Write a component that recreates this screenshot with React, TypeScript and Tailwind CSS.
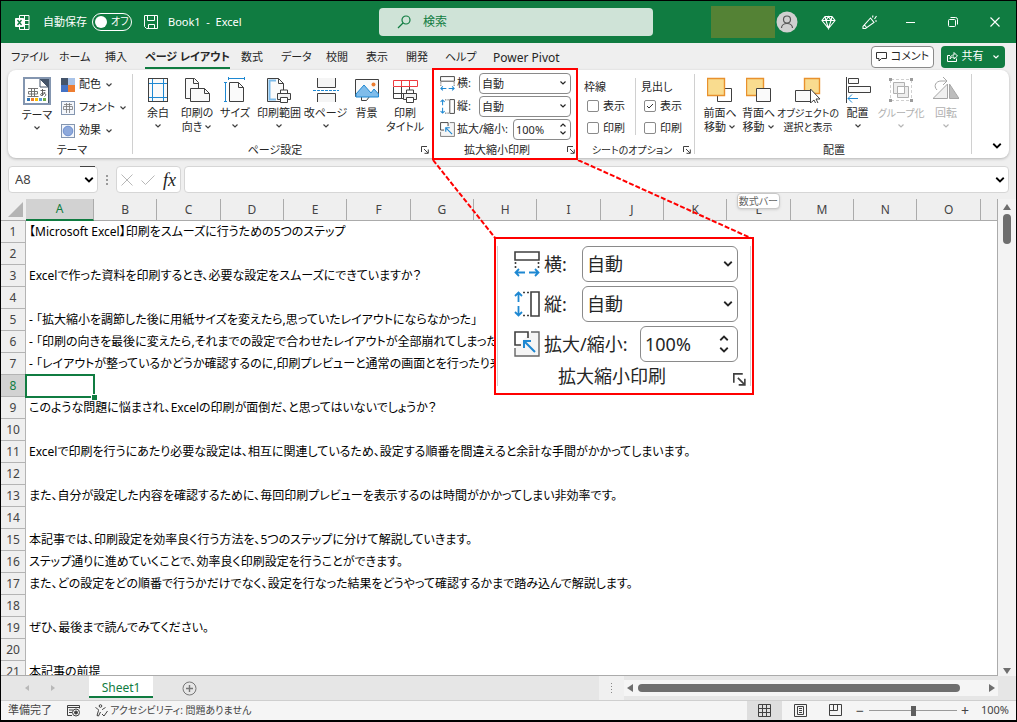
import { ReactNode } from 'react';
import clsx from 'clsx';

const BLUE = '#1e88d2';
const DARK = '#404040';
const ORANGE = '#e8912d';

/* ---------- icons ---------- */

interface IconProps {
  children?: ReactNode;
  className?: string;
  box?: string;
}

function Icon({ children, className = 'size-[26px]', box = '0 0 26 26' }: IconProps) {
  return (
    <svg viewBox={box} className={clsx('shrink-0', className)} fill="none" stroke={DARK} aria-hidden="true">
      {children}
    </svg>
  );
}

function Chevron({ className = 'size-2 text-[#404040]', up = false }: { className?: string; up?: boolean }) {
  return (
    <svg viewBox="0 0 8 8" className={clsx('shrink-0', className)} fill="none" stroke="currentColor" strokeWidth="1.2" aria-hidden="true">
      <path d={up ? 'M1.5 5.5 4 3l2.5 2.5' : 'M1.5 2.5 4 5l2.5-2.5'} />
    </svg>
  );
}

const ThemeIcon = () => (
  <Icon className="size-7" box="0 0 28 28">
    <rect x="1" y="1" width="26" height="26" fill="#fff" stroke="#8496b0" strokeWidth="2" />
    <path d="M17 2h9v24h-1V10z" fill="#44546a" stroke="none" />
    <path d="M17 2v8h8z" fill="#fff" stroke="#44546a" />
    <path d="M5 11.500h10M8.500 11.500v8M11.500 11.500v8M4.500 19.500h11M5.500 14.500h9v2.500h-9z" stroke="#666" strokeWidth=".9" />
    <path d="M17.500 13.500h5M19.500 12v6.500M22 15c-1 2.500-3 4-4 3.500s0-2.500 2.500-2.500 3 2.500 1 3.500" stroke="#555" strokeWidth=".9" />
    <path d="M4 22.500h3" stroke="#2e75b6" strokeWidth="3" />
    <path d="M8 22.500h3" stroke="#ed7d31" strokeWidth="3" />
    <path d="M12 22.500h3" stroke="#ffc000" strokeWidth="3" />
    <path d="M16 22.500h3" stroke="#5b9bd5" strokeWidth="3" />
    <path d="M20 22.500h3" stroke="#70ad47" strokeWidth="3" />
  </Icon>
);

const ColorsIcon = () => (
  <Icon className="size-[14px]" box="0 0 14 14">
    <g stroke="none">
      <path d="M0 0h7v7H0z" fill="#44546a" />
      <path d="M7 0h7v7H7z" fill="#a9c3e8" />
      <path d="M0 7h7v7H0z" fill="#4472c4" />
      <path d="M7 7h7v7H7z" fill="#ed7d31" />
    </g>
  </Icon>
);

const FontsIcon = () => (
  <Icon className="size-[14px]" box="0 0 14 14">
    <rect x=".5" y=".5" width="13" height="13" fill="#f3f6fb" stroke="#8496b0" />
    <path d="M3 3.500h8M5.500 2v10M8.500 2v10M2.500 5.500h9v3h-9z" stroke="#777" strokeWidth=".8" />
  </Icon>
);

const EffectsIcon = () => (
  <Icon className="size-[14px]" box="0 0 14 14">
    <rect x=".5" y=".5" width="13" height="13" fill="#f3f6fb" stroke="#8496b0" />
    <circle cx="7" cy="7" r="4.800" fill="#8ea9db" stroke="#6d8fd0" />
  </Icon>
);

const MarginsIcon = () => (
  <Icon>
    <rect x="3.500" y="1.500" width="19" height="23" fill="#fafafa" />
    <path d="M7.500 2v22M18.500 2v22M4 6.500h18M4 20.500h18" stroke={BLUE} />
  </Icon>
);

const OrientationIcon = () => (
  <Icon>
    <path d="M6 21.500H1.500v-20h9l4 4V11" fill="#fafafa" />
    <path d="M9.500 1.500v5h5" />
    <path d="M6.500 11.500h14l5 5v8h-19z" fill="#fafafa" />
    <path d="M20.500 11.500v5h5" />
  </Icon>
);

const SizeIcon = () => (
  <Icon>
    <path d="M7.500 5.500h9l5 5v14h-14z" fill="#fafafa" />
    <path d="M16.500 5.500v5h5" />
    <path d="M7 1.500h15M6.500 0v3M22.500 0v3M3.500 5v20M2 5.500h3M2 24.500h3" stroke={BLUE} />
  </Icon>
);

const Printer = () => (
  <g>
    <path d="M14.500 17v-4h7v4" fill="#fff" />
    <path d="M11.500 16.500h13v6h-13z" fill="#f2f2f2" />
    <path d="M14.500 20.500h7v5h-7z" fill="#fff" />
  </g>
);

const PrintAreaIcon = () => (
  <Icon>
    <path d="M1.500 1.500h11l5 5v18h-16z" fill="#fafafa" />
    <path d="M12.500 1.500v5h5" />
    <path d="M10 3.500H3.500v19H10" stroke="#7fbcea" strokeWidth="2" />
    <Printer />
  </Icon>
);

const BreaksIcon = () => (
  <Icon>
    <path d="M4.500 1v9.500h18V1M4.500 25v-8.500h18V25" fill="#f5f5f5" />
    <path d="M0 13.500h26" stroke={BLUE} strokeDasharray="3 1" />
  </Icon>
);

const BackgroundIcon = () => (
  <Icon>
    <path d="M1.500 2.500h23v17h-9l-3 4h-5v-4h-6z" fill="#fafafa" />
    <circle cx="19.500" cy="7.500" r="2" fill="#ed7d31" stroke="none" />
    <path d="m2 17 8-9 7 8 3-4 4.500 5v3H2z" fill="#7fbcea" stroke={BLUE} />
  </Icon>
);

const PrintTitlesIcon = () => (
  <Icon>
    <path d="M1.500 10v11.500H12M1.500 16.500H14M9.500 10v11M17.500 10v4" />
    <path d="M1.500 3.500h24v6h-24zM9.500 3.500v6M17.500 3.500v6" fill="#fff" stroke="#ee3b40" />
    <Printer />
  </Icon>
);

const BringForwardIcon = () => (
  <Icon>
    <path d="M10.500 11.500h14v13h-14z" />
    <path d="M.5 1.500h17v17H.5z" fill="#f9dc8f" stroke={ORANGE} strokeWidth="1.400" />
  </Icon>
);

const SendBackwardIcon = () => (
  <Icon>
    <path d="M.5 1.500h17v17H.5z" fill="#f9dc8f" stroke={ORANGE} strokeWidth="1.400" />
    <path d="M10.500 11.500h14v13h-14z" fill="#fafafa" />
  </Icon>
);

const SelectionIcon = () => (
  <Icon>
    <path d="M9.500 1.500h15v15h-15z" fill="#f9dc8f" stroke={ORANGE} strokeWidth="1.400" />
    <path d="M.5 13.500h15v11H.5z" fill="#fafafa" />
    <path d="M15.500 12v14l3.500-3 2 4 2-1-2-4h4z" fill="#fff" />
  </Icon>
);

const AlignIcon = () => (
  <Icon>
    <path d="M1.500 0v26" />
    <path d="M3.500 1.500h10v5h-10zM3.500 9.500h22v6h-22z" fill="#fafafa" />
    <path d="M3 21.500h10M7 17.500l-4 4 4 4" stroke={BLUE} />
  </Icon>
);

const GroupIcon = () => (
  <Icon>
    <g stroke="#b0b0b0">
      <path d="M2.500 3v20M23.500 3v20M3 2.500h20M3 23.500h20" strokeDasharray="3 2" stroke="#d0d0d0" />
      <path d="M5.500 5.500h11v11h-11zM9.500 9.500h11v11h-11z" fill="#eee" />
      <path d="M9.500 9.500h7v7h-7z" fill="#fff" />
    </g>
    <path d="M1 1h3v3H1zM22 1h3v3h-3zM1 22h3v3H1zM22 22h3v3h-3z" fill="#9c9c9c" stroke="none" />
  </Icon>
);

const RotateIcon = () => (
  <Icon>
    <g stroke="#a6a6a6">
      <path d="M14.500 7v14.500H0z" fill="#f0f0f0" />
      <path d="M16.500 7v14.500H26z" fill="#bdbdbd" />
      <path d="M4 13c-4-4-1-9 4-9h5M10 0l4 4-4 4" />
    </g>
  </Icon>
);

const WidthIcon = ({ className }: IconProps) => (
  <Icon className={className}>
    <path d="M1 1h24v8H1z" strokeWidth="1.600" />
    <path d="M1.500 11v2m0 2v2M24.500 11v2m0 2v2" strokeWidth="1.600" />
    <path d="M11 21.500H1.500M5 18l-3.500 3.500L5 25M15 21.500h9.500M21 18l3.500 3.500L21 25" stroke={BLUE} strokeWidth="1.800" />
  </Icon>
);

const HeightIcon = ({ className }: IconProps) => (
  <Icon className={className}>
    <path d="M17 1h8v24h-8z" strokeWidth="1.600" />
    <path d="M9 1.500h2m2 0h2M9 24.500h2m2 0h2" strokeWidth="1.600" />
    <path d="M4.500 11V1.500M1 5l3.500-3.500L8 5M4.500 15v9.500M1 21l3.500 3.500L8 21" stroke={BLUE} strokeWidth="1.800" />
  </Icon>
);

const ScaleIcon = ({ className }: IconProps) => (
  <Icon className={className}>
    <path d="M17 1h8v24H1v-8" fill="#f5f5f5" strokeWidth="1.400" stroke="#666" />
    <path d="M14 7V1H1v13h6" strokeWidth="1.600" />
    <path d="M21 21 10.500 10.500M10 17v-7h7" stroke={BLUE} strokeWidth="2" />
  </Icon>
);

const LauncherIcon = ({ className = 'size-2' }: IconProps) => (
  <Icon className={className} box="0 0 8 8">
    <path d="M.5 6V.5H6M3 3l4 4M7.300 3.500v3.800H3.500" />
  </Icon>
);

/* ---------- title bar ---------- */

function TitleBar() {
  return (
    <header className="grid h-[42px] shrink-0 grid-cols-[378fr_274fr_363fr] items-center bg-[#107c41] text-xs text-white">
      <div className="flex items-center pl-[14px]">
        <svg viewBox="0 0 15 15" className="size-[15px]" fill="none" stroke="#fff" aria-hidden="true">
          <path d="M4.500 3V.500h9.500v14H4.500V12M9.500.5v14M9 5.500h5M9 9.500h5" />
          <path d="M.5 3.500h8v8h-8z" fill="#fff" />
          <path d="m2.500 5 4 5M6.500 5l-4 5" stroke="#107c41" strokeWidth="1.300" />
        </svg>
        <span className="ml-[13px] w-[49px] text-[11px]">自動保存</span>
        <button className="flex h-[18px] w-10 items-center gap-1 rounded-full border border-white pl-0.5 text-[10px]" aria-label="自動保存 オフ">
          <span className="size-3 rounded-full bg-white" />
          オフ
        </button>
        <button className="ml-3" aria-label="上書き保存">
          <svg viewBox="0 0 14 14" className="size-[14px]" fill="none" stroke="#fff" aria-hidden="true">
            <path d="M.5.5h13v13h-11l-2-2zM3.500.5v5h7v-5M4.500 13.500v-4h6v4" />
          </svg>
        </button>
        <span className="ml-[10px] text-[11px] whitespace-pre">Book1  -  Excel</span>
      </div>
      <label className="flex h-7 items-center gap-3 rounded bg-[#cfe3d7] pl-[18px]">
        <svg viewBox="0 0 14 14" className="size-[14px]" fill="none" stroke="#107c41" strokeWidth="1.200" aria-hidden="true">
          <circle cx="9" cy="5" r="4" />
          <path d="m6 8-5 5" />
        </svg>
        <input className="w-40 bg-transparent outline-none placeholder:text-[#107c41]" placeholder="検索" aria-label="検索" />
      </label>
      <div className="flex items-center justify-end pr-4">
        <span className="h-8 w-16 bg-[#548235]" />
        <button aria-label="アカウント" className="ml-px">
          <svg viewBox="0 0 22 22" className="size-[22px]" fill="none" stroke="#555" strokeWidth="1.200" aria-hidden="true">
            <circle cx="11" cy="11" r="10.500" fill="#d0d0d0" stroke="none" />
            <circle cx="11" cy="8.500" r="3.500" />
            <path d="M5.500 17c0-6 11-6 11 0" />
          </svg>
        </button>
        <button aria-label="プレミアム" className="ml-[23px]">
          <svg viewBox="0 0 15 15" className="size-[15px]" fill="none" stroke="#fff" strokeWidth="1.100" aria-hidden="true">
            <path d="M4 1.500h7l3 4-6.500 8L1 5.500zM1 5.500h13M4 1.500l1 4 2.500 8 2.500-8 1-4M5 5.500l2.500-4 2.500 4" />
          </svg>
        </button>
        <button aria-label="新機能" className="ml-[26px]">
          <svg viewBox="0 0 15 15" className="size-[15px]" fill="none" stroke="#fff" strokeWidth="1.100" aria-hidden="true">
            <path d="M8.500 3 1 11.500v2h2.500L12 7.500zM2.500 10l2.500 3M10.500 2.500l.5-2M12.500 4l2-3M13 6h2" />
          </svg>
        </button>
        <button aria-label="最小化" className="ml-[29px]">
          <svg viewBox="0 0 10 10" className="size-[10px]" stroke="#fff" aria-hidden="true">
            <path d="M0 5.500h9" />
          </svg>
        </button>
        <button aria-label="元に戻す" className="ml-8">
          <svg viewBox="0 0 10 10" className="size-[10px]" fill="none" stroke="#fff" aria-hidden="true">
            <rect x=".5" y="2.500" width="7" height="7" rx="1" />
            <path d="M2.500.5h5a2 2 0 0 1 2 2v5" />
          </svg>
        </button>
        <button aria-label="閉じる" className="ml-8">
          <svg viewBox="0 0 10 10" className="size-[10px]" stroke="#fff" strokeWidth="1.100" aria-hidden="true">
            <path d="m.5.5 9 9M9.500.5l-9 9" />
          </svg>
        </button>
      </div>
    </header>
  );
}

/* ---------- ribbon tabs ---------- */

const TABS = [
  { name: 'ファイル', width: 'w-12' },
  { name: 'ホーム', width: 'w-[46px]' },
  { name: '挿入', width: 'w-10' },
  { name: 'ページ レイアウト', width: 'w-24' },
  { name: '数式', width: 'w-10' },
  { name: 'データ', width: 'w-[45px]' },
  { name: '校閲', width: 'w-10' },
  { name: '表示', width: 'w-10' },
  { name: '開発', width: 'w-[39px]' },
  { name: 'ヘルプ', width: 'w-12' },
  { name: 'Power Pivot', width: 'w-20 text-xs' },
];

function RibbonTabs() {
  return (
    <nav className="flex h-[27px] items-center pr-[11px] pl-[10px] text-[11px]">
      {TABS.map((tab) => (
        <div key={tab.name} className={tab.width}>
          <button
            className={clsx(
              'mt-1 h-5 border-b-2 whitespace-nowrap',
              tab.name === 'ページ レイアウト' ? 'border-[#107c41] font-bold' : 'border-transparent',
            )}
          >
            {tab.name}
          </button>
        </div>
      ))}
      <button className="ml-auto flex h-[22px] w-[63px] items-center justify-center gap-1 rounded border border-[#8a8a8a] bg-white whitespace-nowrap">
        <svg viewBox="0 0 11 11" className="size-[11px]" fill="none" stroke="#333" aria-hidden="true">
          <path d="M.5 1.500h10v6h-5l-2.500 2.500v-2.500H.5z" />
        </svg>
        コメント
      </button>
      <button className="ml-[7px] flex h-[22px] w-16 items-center justify-center gap-1 rounded bg-[#107c41] text-white">
        <svg viewBox="0 0 11 11" className="size-[11px]" fill="none" stroke="#fff" aria-hidden="true">
          <path d="M3 4.500H.5v6h9v-3M3 8c0-3 2-4 4-4V1.500L10.500 5 7 8V6C5 6 4 6.500 3 8z" />
        </svg>
        共有
        <Chevron className="ml-1 size-2" />
      </button>
    </nav>
  );
}

/* ---------- ribbon ---------- */

interface GroupProps {
  title: string;
  className: string;
  titleClass?: string;
  launcher?: boolean;
  children: ReactNode;
}

function Group({ title, className, titleClass, launcher, children }: GroupProps) {
  return (
    <section className={clsx('relative flex shrink-0 flex-col', className)}>
      <div className="flex h-[73px]">{children}</div>
      <div className="flex h-[14px] items-center">
        <h2 className={clsx('flex-1 text-center leading-[14px]', titleClass)}>{title}</h2>
        {launcher && (
          <button aria-label={`${title}の詳細`} className="absolute right-[3px]">
            <LauncherIcon />
          </button>
        )}
      </div>
    </section>
  );
}

const Divider = ({ className = 'my-1 bg-[#d0d0d0]' }: { className?: string }) => (
  <div className={clsx('w-px shrink-0', className)} />
);

interface BigButtonProps {
  icon: ReactNode;
  lines: string[];
  width: string;
  menu?: 'inline' | 'below';
  disabled?: boolean;
}

function BigButton({ icon, lines, width, menu, disabled }: BigButtonProps) {
  const chevron = disabled ? 'size-2 text-[#b5b5b5]' : 'size-2 text-[#404040]';
  return (
    <button
      disabled={disabled}
      className={clsx('flex shrink-0 flex-col items-center pt-[7px] leading-[14px] whitespace-nowrap', width, disabled && 'text-[#b0b0b0]')}
    >
      {icon}
      <span className="mt-[3px]">{lines[0]}</span>
      {lines[1] && (
        <span className="flex items-center gap-0.5">
          {lines[1]}
          {menu === 'inline' && <Chevron className={chevron} />}
        </span>
      )}
      {menu === 'below' && <Chevron className={clsx('mt-0.5', chevron)} />}
    </button>
  );
}

const THEME_ITEMS = [
  { name: '配色', icon: <ColorsIcon /> },
  { name: 'フォント', icon: <FontsIcon /> },
  { name: '効果', icon: <EffectsIcon /> },
];

const SCALE_ROWS = [
  { id: 'width', label: '横:', Glyph: WidthIcon },
  { id: 'height', label: '縦:', Glyph: HeightIcon },
];

function ScaleFields() {
  return (
    <div className="flex flex-1 flex-col gap-0.5 pt-[3px] pr-[7px] pl-2">
      {SCALE_ROWS.map(({ id, label, Glyph }) => (
        <div key={id} className="flex h-[21px] items-center">
          <Glyph className="size-[15px]" />
          <label htmlFor={id} className="ml-0.5 flex-1 whitespace-nowrap">{label}</label>
          <div className="relative">
            <select id={id} className="block h-[21px] w-[92px] appearance-none rounded border border-[#8a8a8a] bg-white pl-0.5 leading-[14px]">
              <option>自動</option>
            </select>
            <Chevron className="pointer-events-none absolute top-1.5 right-1 size-2" />
          </div>
        </div>
      ))}
      <div className="flex h-[21px] items-center">
        <ScaleIcon className="size-[15px]" />
        <label htmlFor="scale" className="ml-0.5 flex-1 whitespace-nowrap">拡大/縮小:</label>
        <div className="relative">
          <input id="scale" defaultValue="100%" className="block h-[21px] w-[58px] rounded border border-[#8a8a8a] bg-white pl-0.5" />
          <span className="pointer-events-none absolute top-0.5 right-1">
            <Chevron up className="size-2" />
            <Chevron className="size-2" />
          </span>
        </div>
      </div>
    </div>
  );
}

/* Enlarged copy of the scaling group, joined to it by two dashed leader lines */
function Callout() {
  return (
    <>
      <div className="pointer-events-none absolute inset-x-0 -top-0.5 -bottom-0.5 z-20 border-2 border-[#ff0000]" />
      <svg viewBox="0 0 322 80" className="pointer-events-none absolute top-[90px] left-0 z-20 h-20 w-[322px]" stroke="#ff0000" strokeWidth="2" strokeDasharray="5 2" aria-hidden="true">
        <path d="M1 0 64 79M146 0 321 79" />
      </svg>
      <div className="absolute top-[167px] left-[62px] z-20 flex w-[260px] border-2 border-[#ff0000] bg-white px-px py-[7px] text-lg">
        <Divider className="bg-[#d0d0d0]" />
        <div className="flex flex-1 flex-col gap-1 pr-3 pl-4">
          {SCALE_ROWS.map(({ id, label, Glyph }) => (
            <div key={id} className="flex h-9 items-center">
              <Glyph className="size-[26px]" />
              <label htmlFor={`${id}-large`} className="ml-1 flex-1 whitespace-nowrap">{label}</label>
              <div className="relative">
                <select id={`${id}-large`} className="block h-9 w-[156px] appearance-none rounded-md border border-[#8a8a8a] bg-white pl-1 leading-6">
                  <option>自動</option>
                </select>
                <Chevron className="pointer-events-none absolute top-3 right-1 size-3" />
              </div>
            </div>
          ))}
          <div className="flex h-9 items-center">
            <ScaleIcon className="size-[26px]" />
            <label htmlFor="scale-large" className="ml-1 flex-1 whitespace-nowrap">拡大/縮小:</label>
            <div className="relative">
              <input id="scale-large" defaultValue="100%" className="block h-9 w-[98px] rounded-md border border-[#8a8a8a] bg-white pl-1" />
              <span className="pointer-events-none absolute top-1.5 right-2 flex flex-col">
                <Chevron up className="size-3" />
                <Chevron className="size-3" />
              </span>
            </div>
          </div>
          <div className="relative h-5 pr-7 text-center leading-5">
            拡大縮小印刷
            <LauncherIcon className="absolute -right-2 bottom-0 size-[13px]" />
          </div>
        </div>
        <Divider className="bg-[#d0d0d0]" />
      </div>
    </>
  );
}

const SHEET_OPTIONS = [
  { title: '枠線', checks: [false, false], pad: 'w-[57px] pl-1.5' },
  { title: '見出し', checks: [true, false], pad: 'pl-[5px]' },
];

function CheckBox({ label, name, checked }: { label: string; name: string; checked: boolean }) {
  return (
    <label className="relative flex h-[22px] items-center gap-1 pl-[3px]">
      <input
        type="checkbox"
        aria-label={name}
        defaultChecked={checked}
        className="peer size-3 appearance-none rounded-[2px] border border-[#8a8a8a] bg-white"
      />
      <svg viewBox="0 0 12 12" className="pointer-events-none absolute left-[3px] hidden size-3 peer-checked:block" fill="none" stroke="#333" aria-hidden="true">
        <path d="m3 6 2 2 4-4" />
      </svg>
      {label}
    </label>
  );
}

function Ribbon() {
  return (
    <div className="mx-[7px] flex h-[88px] shrink-0 rounded-lg bg-white text-[11px] shadow-[0_1px_3px_rgba(0,0,0,0.25)]">
      <Group title="テーマ" className="w-[124px]" titleClass="pl-1">
        <BigButton icon={<ThemeIcon />} lines={['テーマ']} width="w-11 ml-[7px]" menu="below" />
        <div className="flex flex-col pt-[3px] pl-0.5">
          {THEME_ITEMS.map((item) => (
            <button key={item.name} className="flex h-[23px] items-center gap-1 whitespace-nowrap">
              {item.icon}
              {item.name}
              <Chevron />
            </button>
          ))}
        </div>
      </Group>
      <Divider />
      <Group title="ページ設定" className="w-[299px] pl-[5px]" titleClass="pr-5" launcher>
        <BigButton icon={<MarginsIcon />} lines={['余白']} width="w-10" menu="below" />
        <BigButton icon={<OrientationIcon />} lines={['印刷の', '向き']} width="w-[38px]" menu="inline" />
        <BigButton icon={<SizeIcon />} lines={['サイズ']} width="w-[38px]" menu="below" />
        <BigButton icon={<PrintAreaIcon />} lines={['印刷範囲']} width="w-[50px]" menu="below" />
        <BigButton icon={<BreaksIcon />} lines={['改ページ']} width="w-[43px]" menu="below" />
        <BigButton icon={<BackgroundIcon />} lines={['背景']} width="w-[39px]" />
        <BigButton icon={<PrintTitlesIcon />} lines={['印刷', 'タイトル']} width="w-[38px]" />
      </Group>
      <div className="relative">
        <Group title="拡大縮小印刷" className="w-[146px]" titleClass="pr-4" launcher>
          <ScaleFields />
        </Group>
        <Callout />
      </div>
      <Group title="シートのオプション" className="w-[116px]" titleClass="pr-2 text-[10px]" launcher>
        {SHEET_OPTIONS.map((col, i) => (
          <div key={col.title} className="flex">
            {i > 0 && <Divider className="my-2 bg-[#d0d0d0]" />}
            <div className={clsx('pt-2 whitespace-nowrap', col.pad)}>
              <div className="h-[17px] leading-[17px]">{col.title}</div>
              <CheckBox label="表示" name={`${col.title} 表示`} checked={col.checks[0]} />
              <CheckBox label="印刷" name={`${col.title} 印刷`} checked={col.checks[1]} />
            </div>
          </div>
        ))}
      </Group>
      <Divider />
      <Group title="配置" className="w-[276px] pl-1.5" titleClass="pr-1">
        <BigButton icon={<BringForwardIcon />} lines={['前面へ', '移動']} width="w-[38px]" menu="inline" />
        <BigButton icon={<SendBackwardIcon />} lines={['背面へ', '移動']} width="w-[39px]" menu="inline" />
        <BigButton icon={<SelectionIcon />} lines={['オブジェクトの', '選択と表示']} width="w-[60px] text-[10px]" />
        <BigButton icon={<AlignIcon />} lines={['配置']} width="w-[39px]" menu="below" />
        <BigButton icon={<GroupIcon />} lines={['グループ化']} width="w-12 text-[10px]" menu="below" disabled />
        <BigButton icon={<RotateIcon />} lines={['回転']} width="w-[42px]" menu="below" disabled />
      </Group>
      <Divider />
      <button aria-label="リボンを折りたたむ" className="mr-1.5 mb-1.5 ml-auto self-end">
        <Chevron className="size-3 text-black" />
      </button>
    </div>
  );
}

/* ---------- formula bar ---------- */

function FormulaBar() {
  return (
    <div className="mx-[7px] mt-2 flex h-[27px] shrink-0 text-[13px]">
      <div className="relative flex w-[90px] items-center rounded border border-[#d6d6d6] bg-white">
        <input defaultValue="A8" aria-label="名前ボックス" className="w-16 bg-transparent pl-1.5 text-[#444] outline-none" />
        <button aria-label="名前の一覧" className="mr-0.5 ml-auto">
          <Chevron className="size-3 text-black" />
        </button>
        <span className="absolute -top-px right-0.5 h-px w-[15px] bg-[#444]" />
      </div>
      <div className="flex w-[18px] flex-col items-center justify-center gap-0.5">
        <span className="size-0.5 bg-[#9a9a9a]" />
        <span className="size-0.5 bg-[#9a9a9a]" />
        <span className="size-0.5 bg-[#9a9a9a]" />
      </div>
      <div className="flex w-[65px] items-center gap-2 rounded border border-[#d6d6d6] bg-white pl-1">
        <button aria-label="キャンセル">
          <svg viewBox="0 0 12 12" className="size-3" stroke="#b8b8b8" aria-hidden="true">
            <path d="m.5.5 11 11M11.500.5l-11 11" />
          </svg>
        </button>
        <button aria-label="入力">
          <svg viewBox="0 0 14 12" className="h-3 w-[14px]" fill="none" stroke="#b8b8b8" aria-hidden="true">
            <path d="m.5 6.500 4 4 9-9" />
          </svg>
        </button>
        <button className="font-['Liberation_Serif',serif] text-lg leading-none text-[#222] italic">fx</button>
      </div>
      <div className="relative ml-[3px] flex flex-1 items-center rounded border border-[#d6d6d6] bg-white">
        <input aria-label="数式バー" className="w-full bg-transparent px-2 outline-none" />
        <button aria-label="数式バーの展開" className="mr-0.5">
          <Chevron className="size-3 text-black" />
        </button>
        <span role="tooltip" className="absolute top-[26px] right-[228px] z-30 h-4 rounded-sm border border-[#c8c8c8] bg-white px-px text-[10px] leading-[14px] whitespace-nowrap text-[#666] shadow">
          数式バー
        </span>
      </div>
    </div>
  );
}

/* ---------- sheet ---------- */

const COLUMNS = 'ABCDEFGHIJKLMNO'.split('');

const ROWS = [
  '【Microsoft Excel】印刷をスムーズに行うための5つのステップ',
  '',
  'Excelで作った資料を印刷するとき、必要な設定をスムーズにできていますか？',
  '',
  '- 「拡大縮小を調節した後に用紙サイズを変えたら,思っていたレイアウトにならなかった」',
  '- 「印刷の向きを最後に変えたら,それまでの設定で合わせたレイアウトが全部崩れてしまった」',
  '- 「レイアウトが整っているかどうか確認するのに,印刷プレビューと通常の画面とを行ったり来たり」',
  '',
  'このような問題に悩まされ、Excelの印刷が面倒だ、と思ってはいないでしょうか？',
  '',
  'Excelで印刷を行うにあたり必要な設定は、相互に関連しているため、設定する順番を間違えると余計な手間がかかってしまいます。',
  '',
  'また、自分が設定した内容を確認するために、毎回印刷プレビューを表示するのは時間がかかってしまい非効率です。',
  '',
  '本記事では、印刷設定を効率良く行う方法を、5つのステップに分けて解説していきます。',
  'ステップ通りに進めていくことで、効率良く印刷設定を行うことができます。',
  'また、どの設定をどの順番で行うかだけでなく、設定を行なった結果をどうやって確認するかまで踏み込んで解説します。',
  '',
  'ぜひ、最後まで読んでみてください。',
  '',
  '本記事の前提',
];

function Sheet() {
  return (
    <div className="mt-1.5 flex min-h-0 flex-1">
      <div className="min-w-0 flex-1 overflow-hidden border-r border-b border-[#ababab] bg-white">
        <table className="w-full table-fixed border-separate border-spacing-0">
          <colgroup>
            <col className="w-[25px]" />
            <col className="w-[68px]" />
            {COLUMNS.slice(1).map((c) => (
              <col key={c} />
            ))}
            <col className="w-4" />
          </colgroup>
          <thead>
            <tr className="h-[22px] bg-[#efefef] text-xs text-[#444]">
              <th className="border-b border-[#ababab] p-0">
                <svg viewBox="0 0 25 21" className="h-[21px] w-[25px]" aria-hidden="true">
                  <path d="M22 3v15H7z" fill="#b4b4b4" />
                </svg>
              </th>
              {COLUMNS.map((c) => (
                <th
                  key={c}
                  className={clsx(
                    'border-r p-0 leading-5 font-normal',
                    c === 'A'
                      ? 'border-b-2 border-r-[#ababab] border-b-[#107c41] bg-[#d2d2d2] text-[#107c41]'
                      : 'border-b border-[#ababab]',
                  )}
                >
                  {c}
                </th>
              ))}
              <th className="border-b border-[#ababab] p-0" />
            </tr>
          </thead>
          <tbody>
            {ROWS.map((text, i) => {
              const active = i === 7;
              return (
                <tr key={i} className="h-[22px]">
                  <th
                    className={clsx(
                      'border-r border-b border-[#b4b4b4] p-0 text-xs leading-[21px] font-normal',
                      active ? 'bg-[#d2d2d2] text-[#107c41]' : 'bg-[#efefef] text-[#444]',
                    )}
                  >
                    {i + 1}
                  </th>
                  {active ? (
                    <td className="relative p-0">
                      <div className="absolute -inset-px border-2 border-[#107c41]">
                        <span className="absolute -right-1 -bottom-1 size-[5px] bg-[#107c41] outline outline-white" />
                      </div>
                    </td>
                  ) : (
                    <td colSpan={16} className="p-0 pl-[3px] text-xs leading-[22px] whitespace-nowrap text-black">
                      {text}
                    </td>
                  )}
                </tr>
              );
            })}
          </tbody>
        </table>
      </div>
      <div className="flex w-[18px] flex-col items-center bg-[#f3f3f3] pt-[5px] pb-0.5">
        <svg viewBox="0 0 8 6" className="h-1.5 w-2" fill="#6e6e6e" aria-hidden="true">
          <path d="M4 0l4 6H0z" />
        </svg>
        <div className="mt-1 h-[30px] w-2 rounded-full bg-[#6e6e6e]" />
        <svg viewBox="0 0 8 6" className="mt-auto h-1.5 w-2" fill="#6e6e6e" aria-hidden="true">
          <path d="M4 6l4-6H0z" />
        </svg>
      </div>
    </div>
  );
}

function SheetTabs() {
  return (
    <div className="flex h-6 shrink-0 bg-[#e6e6e6]">
      <div className="flex w-[88px] items-center gap-[22px] pl-6">
        <svg viewBox="0 0 4 6" className="h-1.5 w-1" fill="#b8b8b8" aria-hidden="true">
          <path d="M4 0v6L0 3z" />
        </svg>
        <svg viewBox="0 0 4 6" className="h-1.5 w-1" fill="#b8b8b8" aria-hidden="true">
          <path d="M0 0v6l4-3z" />
        </svg>
      </div>
      <button className="mb-0.5 w-16 border-b-2 border-[#107c41] bg-white pt-1 text-xs text-[#107c41]">Sheet1</button>
      <button aria-label="新しいシート" className="ml-[29px]">
        <svg viewBox="0 0 15 15" className="size-[15px]" fill="none" stroke="#777" aria-hidden="true">
          <circle cx="7.500" cy="7.500" r="6.500" />
          <path d="M4 7.500h7M7.500 4v7" strokeWidth="1.400" />
        </svg>
      </button>
      <div className="ml-auto flex w-[25px] flex-col items-center justify-center gap-0.5 bg-[#f0f0f0]">
        <span className="size-px bg-[#888]" />
        <span className="size-px bg-[#888]" />
        <span className="size-px bg-[#888]" />
        <span className="size-px bg-[#888]" />
      </div>
      <div className="my-1 mr-[18px] flex w-[374px] items-center bg-[#f5f5f5] px-[3px]">
        <svg viewBox="0 0 6 8" className="h-2 w-1.5" fill="#6e6e6e" aria-hidden="true">
          <path d="M6 0v8L0 4z" />
        </svg>
        <div className="ml-[5px] h-2 w-[322px] rounded-full bg-[#6e6e6e]" />
        <svg viewBox="0 0 6 8" className="ml-auto h-2 w-1.5" fill="#6e6e6e" aria-hidden="true">
          <path d="M0 0v8l6-4z" />
        </svg>
      </div>
    </div>
  );
}

function StatusBar() {
  return (
    <footer className="flex h-5 shrink-0 items-center border-t border-[#cfcfcf] bg-[#f5f5f5] text-[11px] whitespace-nowrap text-[#444]">
      <span className="w-[58px] pl-[7px]">準備完了</span>
      <button aria-label="マクロの記録" className="ml-2">
        <Icon className="size-[13px]" box="0 0 13 13">
          <path d="M5 11.500H.5v-10h12v3M.5 3.500h12M2 6h4M2 8.500h3" />
          <circle cx="9" cy="8.500" r="3.500" fill="#f5f5f5" />
          <circle cx="9" cy="8.500" r="1.500" fill={DARK} />
        </Icon>
      </button>
      <button className="ml-[15px] flex items-center gap-0.5 text-[10px]">
        <Icon className="size-[13px]" box="0 0 13 13">
          <circle cx="5.500" cy="2" r="1.300" />
          <path d="M.5 3.500c2 1.500 3 1.500 3 3L2 11.500l1.500.5 2-4M10.500 3.500c-2 1.500-3 1-3 2.500M7 10l2 2 3.500-5" />
        </Icon>
        アクセシビリティ: 問題ありません
      </button>
      <div className="ml-auto flex h-full items-center">
        <button aria-label="標準" className="flex h-full w-[35px] items-center justify-center bg-[#dedede]">
          <Icon className="size-[13px]" box="0 0 13 13">
            <path d="M.5.5h12v12H.5zM4.500.5v12M8.500.5v12M.5 4.500h12M.5 8.500h12" />
          </Icon>
        </button>
        <button aria-label="ページ レイアウト表示" className="flex h-full w-9 items-center justify-center">
          <Icon className="size-[13px]" box="0 0 13 13">
            <path d="M.5.5h12v12H.5zM3.500 2.500h6v8h-6zM5 4.500h3M5 6.500h3M5 8.500h3" />
          </Icon>
        </button>
        <button aria-label="改ページ プレビュー" className="flex h-full w-[34px] items-center justify-center">
          <Icon className="size-[13px]" box="0 0 13 13">
            <path d="M.5.5h12v11H.5zM4.500.5v6M8.500.5v6M.5 6.500h8" />
          </Icon>
        </button>
        <button aria-label="縮小" className="w-4 text-center text-sm leading-none">−</button>
        <input
          type="range"
          aria-label="ズーム"
          defaultValue={50}
          className="mr-0.5 ml-px h-[10px] w-[88px] appearance-none bg-[linear-gradient(#9a9a9a,#9a9a9a)] bg-[length:100%_1px] bg-center bg-no-repeat [&::-webkit-slider-thumb]:h-[10px] [&::-webkit-slider-thumb]:w-[5px] [&::-webkit-slider-thumb]:appearance-none [&::-webkit-slider-thumb]:bg-[#5e5e5e]"
        />
        <button aria-label="拡大" className="w-3 text-center text-sm leading-none">+</button>
        <span className="mr-[7px] ml-2 w-[30px] text-right">100%</span>
      </div>
    </footer>
  );
}

export default function App() {
  return (
    <div className="flex h-screen flex-col overflow-hidden border border-b-2 border-black bg-[#efefef] font-['Noto_Sans','Noto_Sans_CJK_JP',sans-serif] text-[#262626] [font-feature-settings:'palt']">
      <TitleBar />
      <RibbonTabs />
      <Ribbon />
      <FormulaBar />
      <Sheet />
      <SheetTabs />
      <StatusBar />
    </div>
  );
}
